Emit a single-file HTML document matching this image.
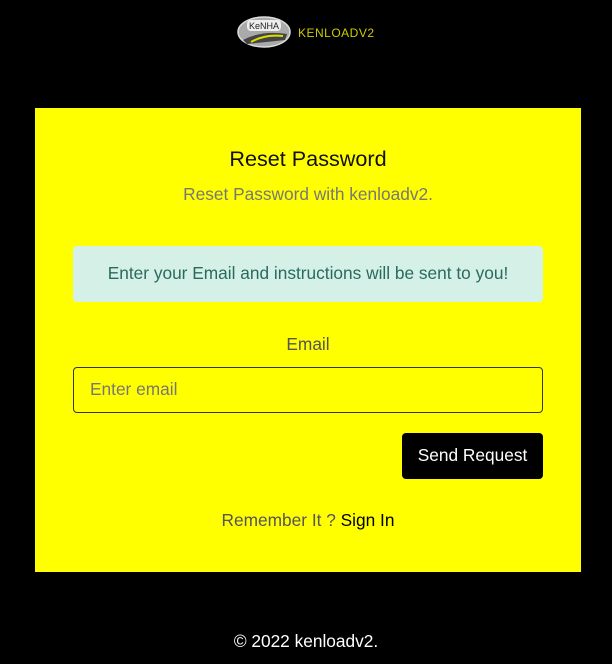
<!DOCTYPE html>
<html><head><style>
body{margin:0;background:#000;width:612px;height:664px;position:relative;font-family:"Liberation Sans",sans-serif;overflow:hidden}
.logo{position:absolute;left:237px;top:16px}
.logotext{position:absolute;left:298px;top:26px;color:#cccc00;font-size:12px;letter-spacing:0.5px}
.card{position:absolute;left:35px;top:108px;width:546px;height:464px;background:#ff0}
.t{position:absolute;width:100%;text-align:center}
.alert{position:absolute;left:38px;top:138px;width:470px;height:56px;background:#d5f0e6;border-radius:4px;color:#2a6a5e;font-size:17.3px;text-align:center;line-height:55px}
.input{position:absolute;left:38px;top:259px;color:#777;font-size:17.3px;line-height:43px;padding-left:16px;box-sizing:border-box;width:470px;height:46px;border:1px solid #333;border-radius:4px}
.btn{position:absolute;left:367px;top:325px;width:141px;height:46px;background:#000;color:#fff;border-radius:4px;font-size:17.3px;text-align:center;line-height:45px}
</style></head><body>
<svg class="logo" width="55" height="32" viewBox="0 0 55 32"><ellipse cx="27" cy="16" rx="26" ry="15" fill="#aaa" stroke="#ddd" stroke-width="1.5"/><path d="M6 24 Q25 14 50 18 L48 24 Q30 26 10 28Z" fill="#444"/><path d="M14 26 Q28 18 46 20" stroke="#dd0" stroke-width="2" fill="none"/><rect x="10" y="4" width="34" height="11" rx="4" fill="#eee"/><text x="27" y="13" font-size="9" text-anchor="middle" fill="#222" font-family="Liberation Sans">KeNHA</text></svg>
<div class="logotext">KENLOADV2</div>
<div class="card">
<div class="t" style="top:38px;font-size:21.6px;color:#111">Reset Password</div>
<div class="t" style="top:76px;font-size:17.3px;color:#777">Reset Password with kenloadv2.</div>
<div class="alert">Enter your Email and instructions will be sent to you!</div>
<div class="t" style="top:226px;font-size:17.3px;color:#555">Email</div>
<div class="input">Enter email</div>
<div class="btn">Send Request</div>
<div class="t" style="top:402px;font-size:17.3px;color:#555">Remember It ? <span style="color:#000">Sign In</span></div>
</div>
<div class="t" style="top:631px;font-size:17.3px;color:#fff">© 2022 kenloadv2.</div>
</body></html>
